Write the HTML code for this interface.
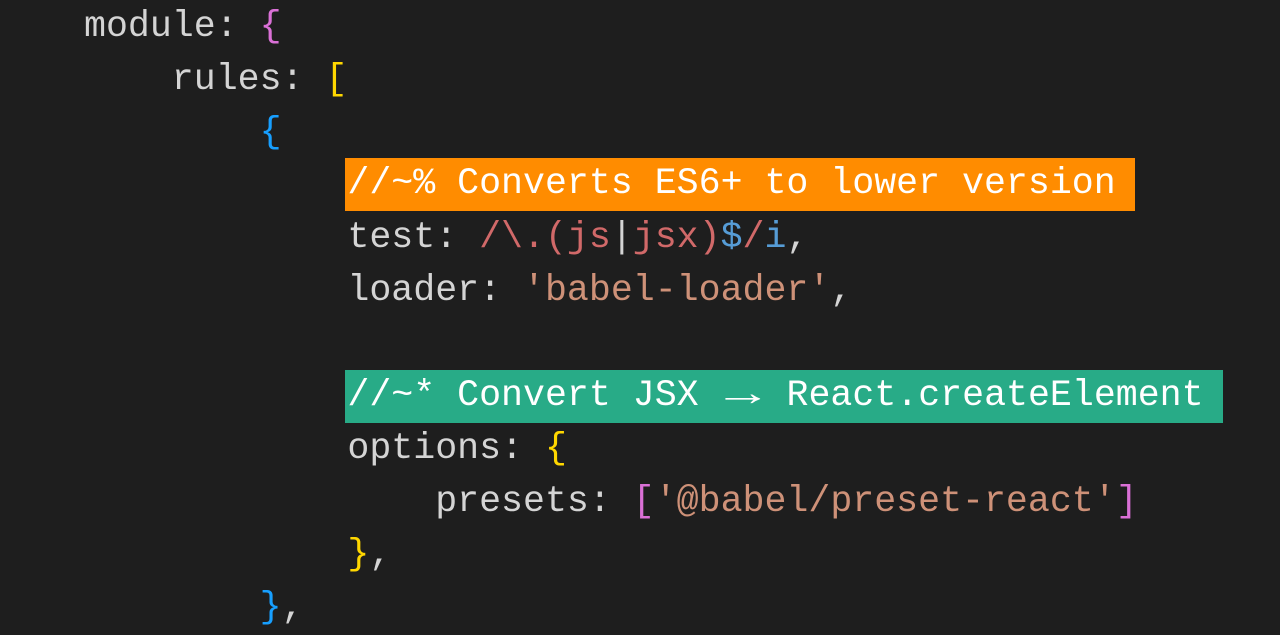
<html><head><style>
body{margin:0;background:#1e1e1e;width:1280px;height:629px;overflow:hidden}
pre{margin:0;position:absolute;left:84px;top:1px;font-family:"Liberation Mono",monospace;font-size:36.6px;line-height:52.8px;color:#d4d4d4}
.p{color:#da70d6}.y{color:#ffd700}.b{color:#179fff}.r{color:#d16969}.s{color:#ce9178}.bl{color:#569cd6}
.o{background:#ff8c00;color:#fff;display:inline-block;width:788px;margin-left:-2px;padding-left:2px;height:53px;vertical-align:top;margin-top:-1px}
.g{background:#28ab87;color:#fff;display:inline-block;width:876px;margin-left:-2px;padding-left:2px;height:53px;vertical-align:top;margin-top:-1px}
.ar{display:inline-block;width:44px;text-align:center;transform:scaleX(1.6)}
</style></head><body><pre>module: <span class="p">{</span>
    rules: <span class="y">[</span>
        <span class="b">{</span>
            <span class="o">//~% Converts ES6+ to lower version</span>
            test: <span class="r">/\.(js</span>|<span class="r">jsx)</span><span class="bl">$</span><span class="r">/</span><span class="bl">i</span>,
            loader: <span class="s">'babel-loader'</span>,

            <span class="g">//~* Convert JSX <span class="ar">→</span> React.createElement</span>
            options: <span class="y">{</span>
                presets: <span class="p">[</span><span class="s">'@babel/preset-react'</span><span class="p">]</span>
            <span class="y">}</span>,
        <span class="b">}</span>,
</pre></body></html>
